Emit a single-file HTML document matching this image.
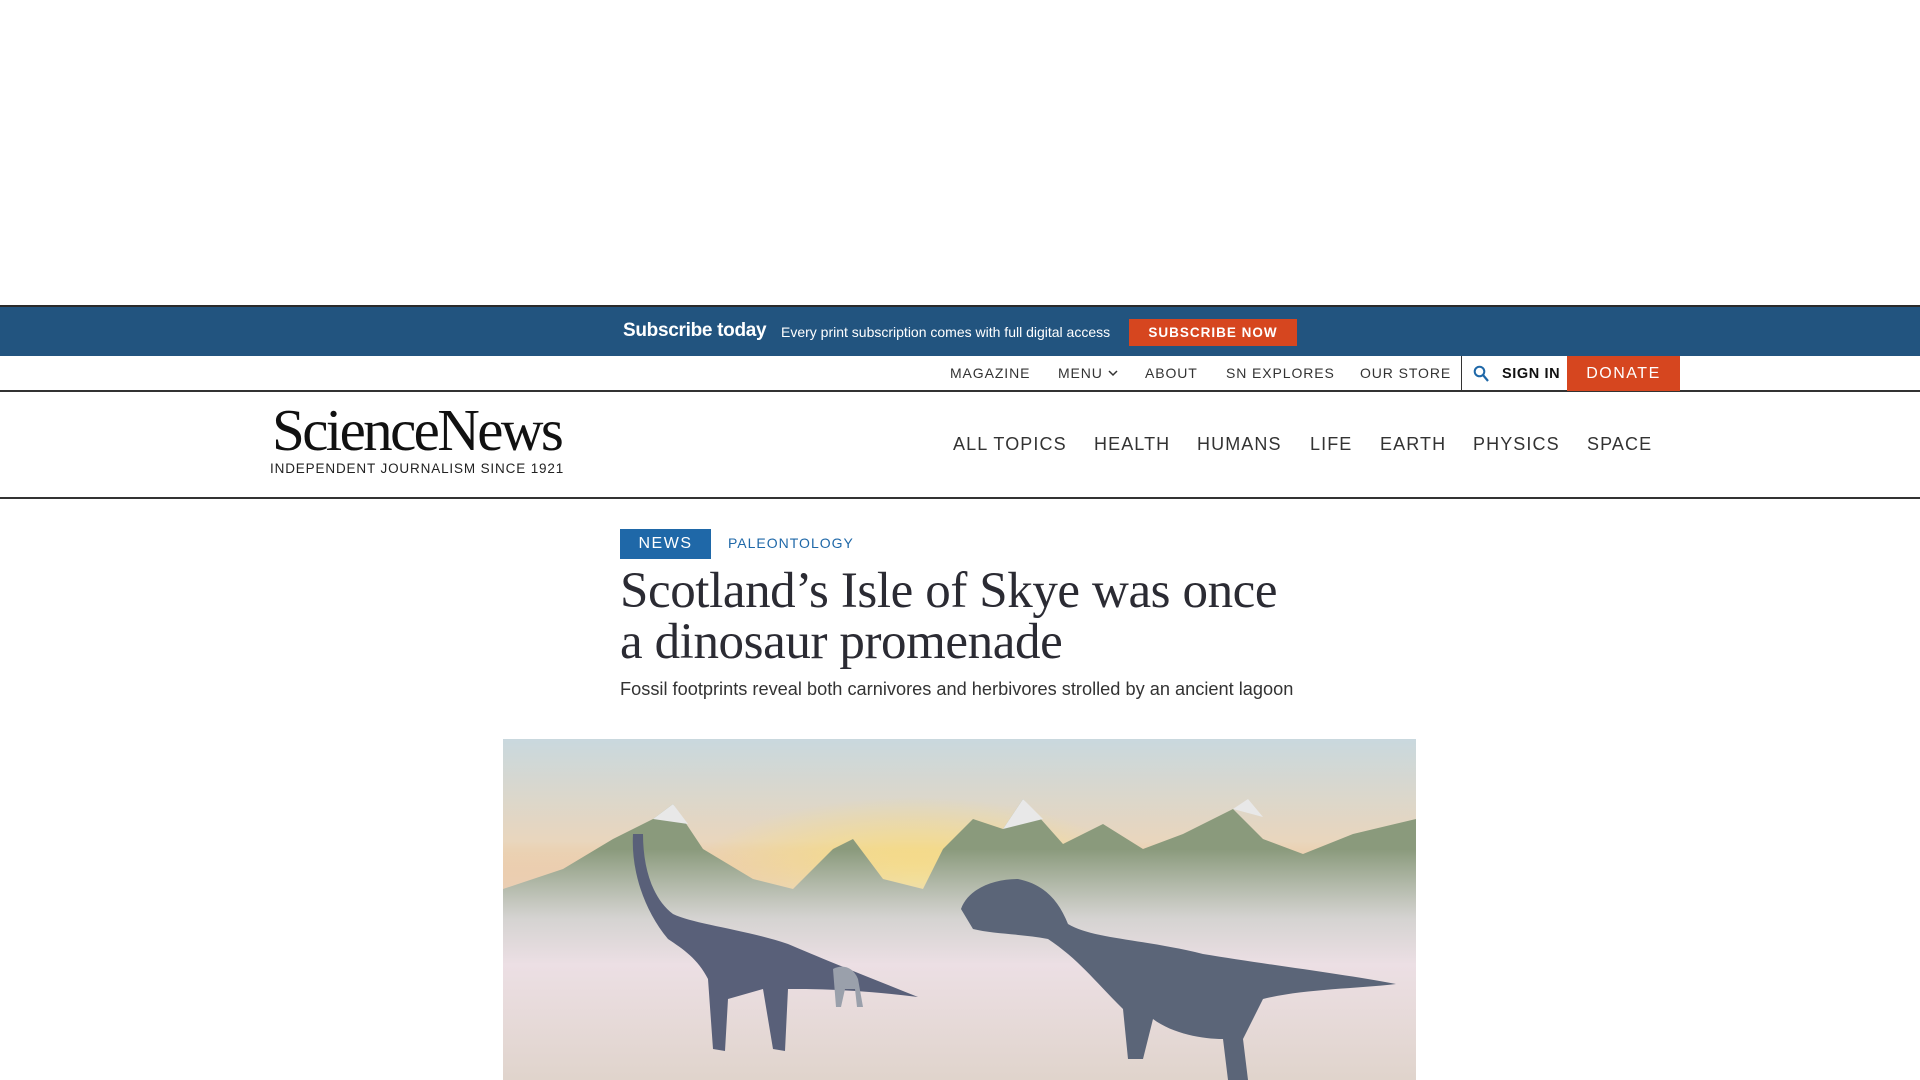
<!DOCTYPE html>
<html><head><meta charset="utf-8"><style>
*{margin:0;padding:0;box-sizing:border-box}
body{width:1920px;height:1080px;overflow:hidden;background:#fff;font-family:"Liberation Sans",sans-serif;color:#2b2b33;position:relative}
.abs{position:absolute}
.ad{top:0;left:0;width:1920px;height:307px;background:#fff;border-bottom:2px solid #2a2a2a}
.blue{top:307px;left:0;width:1920px;height:49px;background:#22547f;color:#fff}
.util{top:356px;left:0;width:1920px;height:36px;border-bottom:2px solid #333}
.util span{position:absolute;top:9px;font-size:14px;letter-spacing:0.9px;color:#333}
.hdr{top:392px;left:0;width:1920px;height:107px;border-bottom:2px solid #333}
.nav{position:absolute;top:42px;font-size:18px;letter-spacing:1.1px;color:#333}
</style></head><body>
<div class="abs ad"></div>
<div class="abs blue">
 <div class="abs" style="left:623px;top:13px;font-size:19px;font-weight:bold;letter-spacing:-0.3px">Subscribe today</div>
 <div class="abs" style="left:781px;top:17px;font-size:14px">Every print subscription comes with full digital access</div>
 <div class="abs" style="left:1129px;top:12px;width:168px;height:27px;background:#d6461f;font-size:13.5px;font-weight:bold;letter-spacing:1px;text-align:center;line-height:27px">SUBSCRIBE NOW</div>
</div>
<div class="abs util">
 <span style="left:950px">MAGAZINE</span>
 <span style="left:1058px">MENU <svg width="10" height="8" viewBox="0 0 10 8" style="vertical-align:1px"><path d="M1 2l4 4 4-4" stroke="#333" stroke-width="1.5" fill="none"/></svg></span>
 <span style="left:1145px">ABOUT</span>
 <span style="left:1226px">SN EXPLORES</span>
 <span style="left:1360px">OUR STORE</span>
 <div class="abs" style="left:1461px;top:0;width:1px;height:35px;background:#333"></div>
 <svg class="abs" style="left:1473px;top:9px" width="16" height="18" viewBox="0 0 16 18"><circle cx="6.5" cy="6.5" r="4.8" stroke="#1f68a8" stroke-width="2" fill="none"/><path d="M10 10l5 6" stroke="#1f68a8" stroke-width="2.2"/></svg>
 <span style="left:1502px;font-weight:bold;color:#111;font-size:14.5px;top:10px;letter-spacing:0.6px">SIGN IN</span>
 <div class="abs" style="left:1567px;top:0;width:113px;height:35px;background:#d6461f;color:#fff;font-size:16px;letter-spacing:1.5px;text-align:center;line-height:35px">DONATE</div>
</div>
<div class="abs hdr">
 <div class="abs" style="left:272px;top:4px;font-family:'Liberation Serif',serif;font-size:59px;letter-spacing:-2.6px;color:#111">ScienceNews</div>
 <div class="abs" style="left:270px;top:69px;font-size:13.5px;letter-spacing:0.85px;color:#222">INDEPENDENT JOURNALISM SINCE 1921</div>
 <span class="nav" style="left:953px">ALL TOPICS</span>
 <span class="nav" style="left:1094px">HEALTH</span>
 <span class="nav" style="left:1197px">HUMANS</span>
 <span class="nav" style="left:1310px">LIFE</span>
 <span class="nav" style="left:1380px">EARTH</span>
 <span class="nav" style="left:1473px">PHYSICS</span>
 <span class="nav" style="left:1587px">SPACE</span>
</div>
<div class="abs" style="left:620px;top:529px;width:91px;height:30px;background:#1f68a8;color:#fff;font-size:16px;letter-spacing:1.5px;text-align:center;line-height:30px">NEWS</div>
<div class="abs" style="left:728px;top:535px;font-size:14px;letter-spacing:1px;color:#1f68a8">PALEONTOLOGY</div>
<div class="abs" style="left:620px;top:566px;width:665px;font-family:'Liberation Serif',serif;font-size:51px;line-height:51px;color:#2b2b33;letter-spacing:-0.4px">Scotland’s Isle of Skye was once a dinosaur promenade</div>
<div class="abs" style="left:620px;top:679px;font-size:18.2px;color:#333">Fossil footprints reveal both carnivores and herbivores strolled by an ancient lagoon</div>
<svg class="abs" style="left:503px;top:739px" width="913" height="341" viewBox="0 0 913 341">
<defs>
<linearGradient id="sky" x1="0" y1="0" x2="0" y2="1"><stop offset="0" stop-color="#c9d8de"/><stop offset=".3" stop-color="#e9d6bd"/><stop offset=".45" stop-color="#f0bc85"/><stop offset=".55" stop-color="#eed6b0"/><stop offset=".75" stop-color="#e3dbe0"/><stop offset="1" stop-color="#e6d8d2"/></linearGradient>
<radialGradient id="sun" cx=".45" cy=".42" r=".25"><stop offset="0" stop-color="#fbe06a" stop-opacity=".9"/><stop offset="1" stop-color="#fbe06a" stop-opacity="0"/></radialGradient>
<linearGradient id="fog" x1="0" y1="0" x2="0" y2="1"><stop offset="0" stop-color="#e8e4e6" stop-opacity="0"/><stop offset=".3" stop-color="#e2dde0" stop-opacity=".85"/><stop offset=".5" stop-color="#ecdfe4"/><stop offset="1" stop-color="#e0d4cc"/></linearGradient>
</defs>
<rect width="913" height="341" fill="url(#sky)"/>
<rect width="913" height="341" fill="url(#sun)"/>
<path d="M0 150 L60 130 L110 100 L150 80 L170 65 L200 110 L250 140 L290 150 L330 110 L350 100 L380 140 L420 150 L440 110 L470 80 L500 90 L520 60 L560 105 L600 85 L640 110 L680 95 L730 70 L760 100 L800 115 L850 95 L913 80 L913 341 L0 341Z" fill="#8a9a7c"/>
<path d="M150 80 L170 65 L185 85Z M500 90 L520 60 L540 80Z M730 70 L745 60 L760 78Z" fill="#e8e8e8"/>
<rect y="110" width="913" height="231" fill="url(#fog)"/>
<path d="M130 95 C128 130 140 170 165 200 C180 210 195 220 205 240 L210 310 L222 312 L225 260 L260 250 L270 310 L282 312 L285 250 C310 250 350 250 415 258 C370 240 320 220 285 205 C240 190 190 185 170 175 C150 160 140 130 140 95Z" fill="#596079"/>
<path d="M458 170 C465 150 490 140 515 140 C540 145 555 160 565 185 C590 200 640 200 700 215 C760 225 840 235 893 245 C850 250 800 250 760 260 L740 300 L745 341 L725 341 L720 300 C700 300 670 295 650 280 L640 320 L625 320 L620 270 C590 240 575 220 545 200 C520 195 490 195 470 190Z" fill="#5b6578"/>
<path d="M330 230 C340 225 350 228 355 240 L360 268 L354 268 L352 250 L342 250 L338 268 L333 268Z" fill="#9aa0ab"/>
</svg>
</body></html>
